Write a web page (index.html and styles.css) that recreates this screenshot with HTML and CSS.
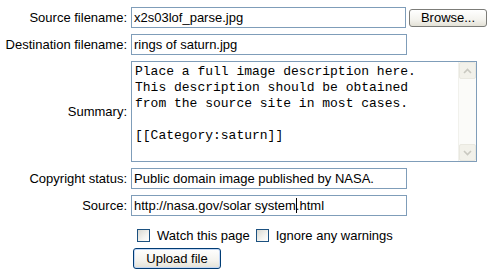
FILE: index.html
```html
<!DOCTYPE html>
<html lang="en">
<head>
    <meta charset="UTF-8">
    <title>Upload file</title>
    <link rel="stylesheet" href="styles.css">
</head>
<body>
    <form class="upload">
        <label class="lbl">Source filename:</label>
        <div class="ctl">
            <div class="field src">x2s03lof_parse.jpg</div>
            <span class="btn browse">Browse...</span>
        </div>

        <label class="lbl">Destination filename:</label>
        <div class="ctl">
            <div class="field">rings of saturn.jpg</div>
        </div>

        <label class="lbl">Summary:</label>
        <div class="ctl">
            <div class="area">
                <div class="area-text">Place a full image description here.
This description should be obtained
from the source site in most cases.

[[Category:saturn]]</div>
                <div class="scroll">
                    <span class="arrow">
                        <svg width="9" height="6" viewBox="0 0 9 6"><path d="M1 5 L4.5 1.5 L8 5" fill="none" stroke="#c9c8c0" stroke-width="1.6"/></svg>
                    </span>
                    <span class="arrow">
                        <svg width="9" height="6" viewBox="0 0 9 6"><path d="M1 1 L4.5 4.5 L8 1" fill="none" stroke="#c9c8c0" stroke-width="1.6"/></svg>
                    </span>
                </div>
            </div>
        </div>

        <label class="lbl">Copyright status:</label>
        <div class="ctl">
            <div class="field">Public domain image published by NASA.</div>
        </div>

        <label class="lbl">Source:</label>
        <div class="ctl">
            <div class="field">http://nasa.gov/solar system<span class="caret"></span>.html</div>
        </div>

        <span></span>
        <div class="ctl checks">
            <span class="check"></span><span class="check-text">Watch this page</span>
            <span class="check"></span><span class="check-text">Ignore any warnings</span>
        </div>

        <span></span>
        <div class="ctl">
            <span class="btn upload-btn">Upload file</span>
        </div>
    </form>
</body>
</html>
```

FILE: styles.css
```css
body {
    margin: 0;
    background: #ffffff;
    font-family: "Liberation Sans", Arial, sans-serif;
    font-size: 13px;
    color: #000;
}

.upload {
    display: grid;
    grid-template-columns: 123px auto;
    column-gap: 4px;
    row-gap: 6px;
    align-items: center;
    padding: 7px 0 0 4px;
}

.lbl {
    text-align: right;
    white-space: nowrap;
}

.ctl {
    display: flex;
    align-items: center;
}

.field {
    box-sizing: border-box;
    width: 276px;
    height: 21px;
    line-height: 19px;
    padding: 0 2px;
    border: 1px solid #7f9db9;
    background: #fff;
    white-space: pre;
}

.field.src {
    width: 275px;
}

.caret {
    display: inline-block;
    width: 1px;
    height: 15px;
    margin-right: -1px;
    background: #000;
    vertical-align: -3px;
}

.btn {
    box-sizing: border-box;
    display: inline-flex;
    align-items: center;
    justify-content: center;
    border-radius: 3px;
    background: linear-gradient(#ffffff, #f4f3ee 60%, #e3e1d6);
}

.browse {
    width: 78px;
    height: 18px;
    margin-left: 3px;
    border: 1px solid #7c7c78;
}

.upload-btn {
    width: 88px;
    height: 21px;
    margin-left: 2px;
    border: 1px solid #003c74;
    box-shadow: inset 0 0 0 1px #c3d7f5;
}

.area {
    box-sizing: border-box;
    display: flex;
    width: 346px;
    height: 101px;
    border: 1px solid #7f9db9;
    background: #fff;
}

.area-text {
    flex: 1;
    padding: 2px 3px;
    font-family: "Liberation Mono", "Courier New", monospace;
    font-size: 13px;
    line-height: 16px;
    white-space: pre;
}

.scroll {
    width: 17px;
    display: flex;
    flex-direction: column;
    justify-content: space-between;
    background: #fbfbf9;
    border-left: 1px solid #f1f1ec;
}

.arrow {
    box-sizing: border-box;
    height: 17px;
    display: flex;
    align-items: center;
    justify-content: center;
    background: #f2f1ea;
    border: 1px solid #e9e8e0;
    border-radius: 2px;
}

.checks {
    margin-top: 7px;
    height: 13px;
}

.check {
    box-sizing: border-box;
    width: 13px;
    height: 13px;
    margin-left: 6px;
    border: 1px solid #1c5180;
    background: linear-gradient(135deg, #d9d9d2, #f4f4f0 60%, #ffffff);
}

.check-text {
    margin-left: 7px;
}
```
